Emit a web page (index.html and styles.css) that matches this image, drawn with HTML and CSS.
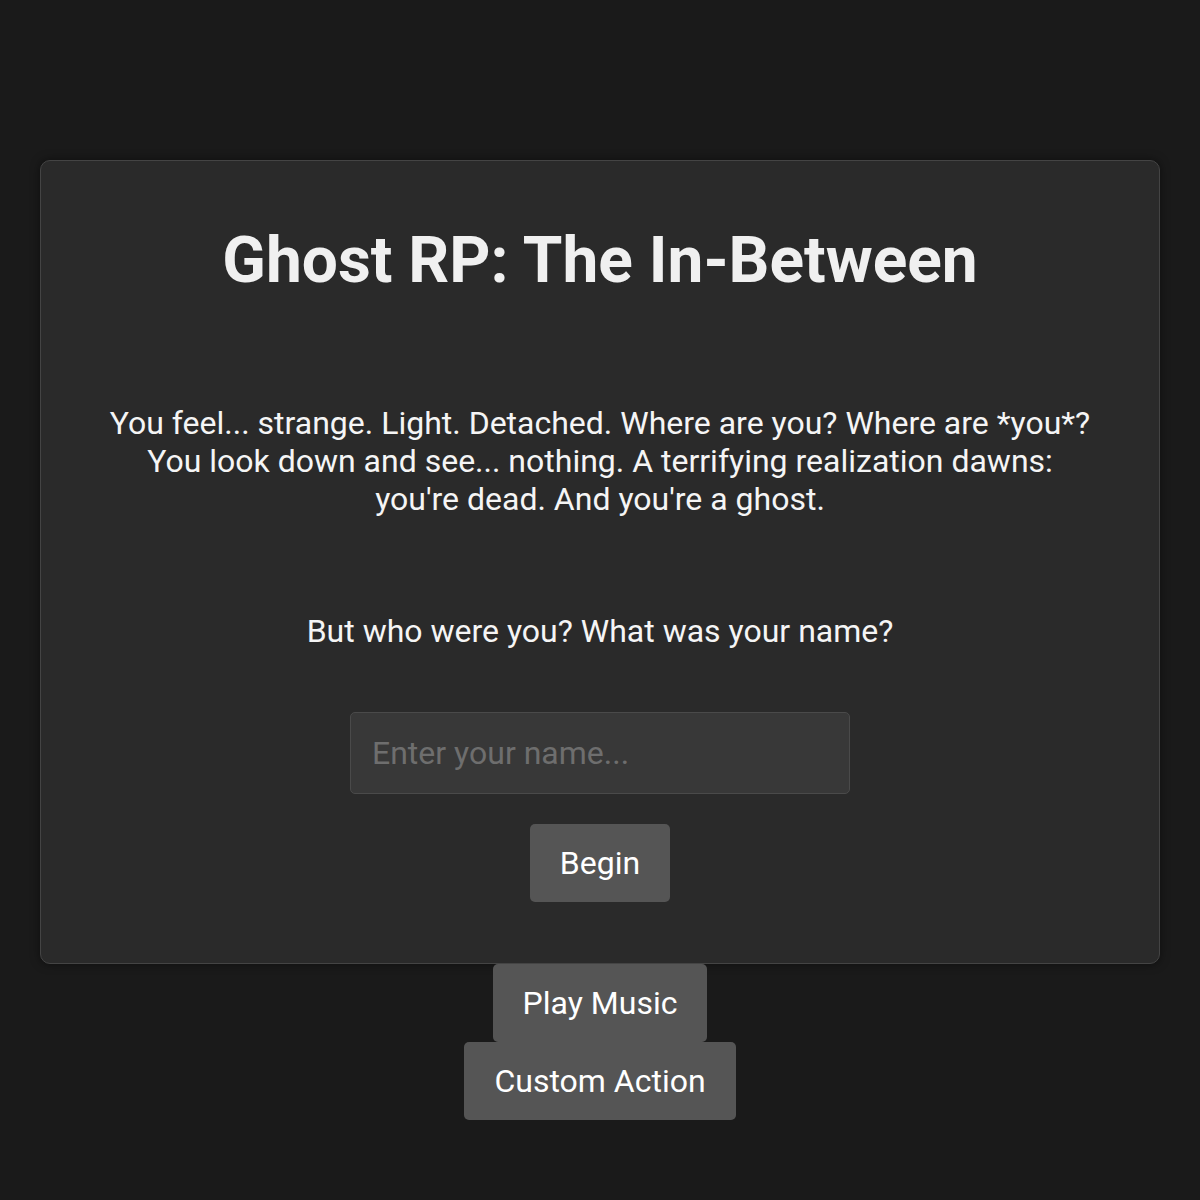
FILE: index.html
```html
<!DOCTYPE html>
<html>
<head>
<meta charset="utf-8">
<link rel="stylesheet" href="styles.css">
</head>
<body>
<main class="page">
  <section class="card">
    <h1 class="title">Ghost RP: The In-Between</h1>
    <p class="story">You feel... strange. Light. Detached. Where are you? Where are *you*?<br>You look down and see... nothing. A terrifying realization dawns:<br>you're dead. And you're a ghost.</p>
    <p class="question">But who were you? What was your name?</p>
    <input class="name-input" type="text" placeholder="Enter your name...">
    <button class="btn">Begin</button>
  </section>
  <div class="extra">
    <button class="btn">Play Music</button>
    <button class="btn">Custom Action</button>
  </div>
</main>
</body>
</html>
```
FILE: styles.css
```css
html, body {
  margin: 0;
  padding: 0;
  background: #1a1a1a;
}
body {
  font-family: Roboto, "Noto Sans", sans-serif;
  color: #f0f0f0;
}
.page {
  padding: 160px 40px 0;
  display: flex;
  flex-direction: column;
  align-items: center;
}
.card {
  box-sizing: border-box;
  width: 1120px;
  height: 804px;
  background: #2a2a2a;
  border: 1px solid #444;
  border-radius: 10px;
  box-shadow: 0 0 10px rgba(0,0,0,0.5);
  display: flex;
  flex-direction: column;
  align-items: center;
  padding: 40px 40px;
}
.title {
  margin: 20px 0 0;
  font-size: 64px;
  font-weight: 700;
  line-height: 80px;
  color: #f0f0f0;
}
.story {
  margin: 103px 0 0;
  font-size: 32px;
  line-height: 38px;
  text-align: center;
  color: #f5f5f5;
}
.question {
  margin: 94px 0 0;
  font-size: 32px;
  line-height: 38px;
  color: #f5f5f5;
}
.name-input {
  box-sizing: border-box;
  margin-top: 62px;
  width: 500px;
  height: 82px;
  padding: 0 21px;
  background: #383838;
  border: 1px solid #4a4a4a;
  border-radius: 5px;
  font-family: Roboto, sans-serif;
  font-size: 32px;
  color: #eee;
  outline: none;
}
.name-input::placeholder {
  color: #6e6e6e;
}
.btn {
  box-sizing: border-box;
  height: 78px;
  padding: 0 30px;
  background: #555;
  border: none;
  border-radius: 5px;
  font-family: Roboto, sans-serif;
  font-size: 32px;
  color: #fff;
}
.card .btn {
  margin-top: 30px;
}
.extra {
  display: flex;
  flex-direction: column;
  align-items: center;
}
```
